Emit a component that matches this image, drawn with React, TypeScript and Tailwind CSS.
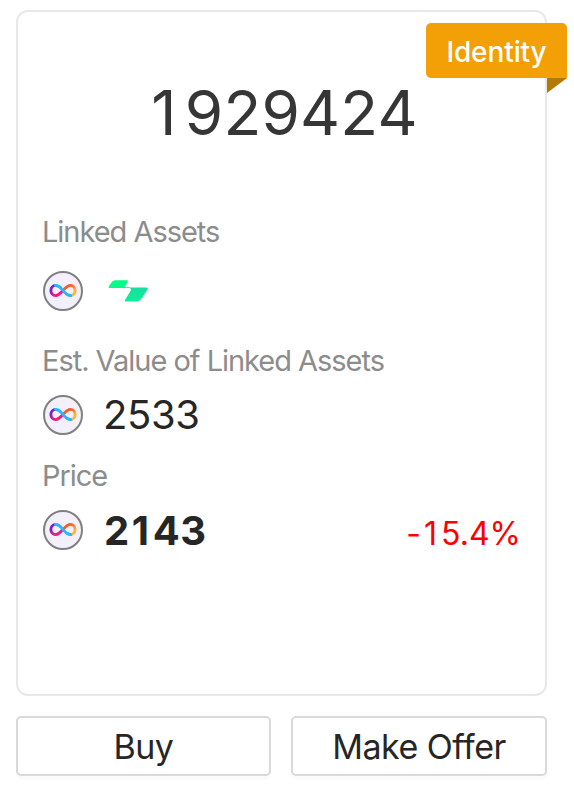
import React from "react";

const InfinityCoin = ({ id }: { id: string }) => (
  <svg viewBox="0 0 40 40" className="size-10 shrink-0" fill="none">
    <defs>
      <linearGradient id={`${id}-left`} x1="7" y1="16" x2="17" y2="25" gradientUnits="userSpaceOnUse">
        <stop offset="0.2" stopColor="#7a1fd0" />
        <stop offset="0.65" stopColor="#f5157e" />
      </linearGradient>
      <linearGradient id={`${id}-right`} x1="22" y1="14" x2="33" y2="24" gradientUnits="userSpaceOnUse">
        <stop offset="0.35" stopColor="#ff5a1f" />
        <stop offset="0.75" stopColor="#ffb43b" />
      </linearGradient>
    </defs>
    <circle cx="20" cy="20" r="19" fill="#f3f0fb" stroke="#808080" strokeWidth="2" />
    <g strokeWidth="2.9">
      <path
        d="M20 19.5C17.5 22.2 15.5 24.6 12.7 24.6C9.9 24.6 7.9 22.3 7.9 19.5C7.9 16.7 9.9 14.4 12.7 14.4"
        stroke={`url(#${id}-left)`}
      />
      <path
        d="M20 19.5C22.5 16.8 24.5 14.4 27.3 14.4C30.1 14.4 32.1 16.7 32.1 19.5C32.1 22.3 30.1 24.6 27.3 24.6"
        stroke={`url(#${id}-right)`}
      />
      <path d="M11.2 14.7C15.6 13.2 17.5 16.8 20 19.5C22.5 22.2 24.4 25.8 28.8 24.3" stroke="#2bb5fb" />
    </g>
  </svg>
);

const SlantedBlocks = () => (
  <svg viewBox="0 0 42 24" className="h-6 w-[42px] shrink-0">
    <defs>
      <linearGradient id="blocks-bottom" x1="0" y1="0" x2="0" y2="1">
        <stop offset="0" stopColor="#17dd9e" />
        <stop offset="1" stopColor="#0cf19b" />
      </linearGradient>
    </defs>
    <path
      d="M8.1 1.2H19.7Q21.8 1.2 20.7 2.8L18.2 7Q17.6 8.2 19.5 8.3H22.5L22.1 8.9H2.7Q.8 8.9 1.9 7.2L4.9 3Q6.1 1.2 8.1 1.2Z"
      fill="#04fb87"
    />
    <path
      d="M20.5 8.4H39.2Q41.9 8.4 40.3 10.9L34.5 19.8Q32.6 22.6 29.3 22.6H19.5Q16.8 22.6 18.5 20L22.9 13.1Q24.8 10 23.1 9.2Q22.4 8.7 20.5 8.7Z"
      fill="url(#blocks-bottom)"
    />
  </svg>
);

const Label = ({ children }: { children: React.ReactNode }) => (
  <p className="-ml-px h-9 whitespace-nowrap text-[29px] leading-9 tracking-[-1.03px] text-[#8c8c8c]">{children}</p>
);

// The narrow "1" gets side padding so that numbers stay evenly spaced
const Digits = ({ value, onePadding }: { value: string; onePadding: string }) => (
  <>
    {value.split("").map((char, i) => (
      <span key={i} className={char === "1" ? onePadding : undefined}>
        {char}
      </span>
    ))}
  </>
);

const actions = [
  { name: "Buy", width: "w-[255px]" },
  { name: "Make Offer", width: "w-[256px]" },
];

export default function App() {
  return (
    <main className="h-[805px] w-[574px] bg-white pt-[10px] pl-4 font-['Inter',sans-serif] text-[#262626]">
      <section className="relative h-[686px] w-[531px] rounded-xl border-2 border-[#e8e8e8] px-[25px]">
        {/* Corner ribbon */}
        <div className="absolute top-[11px] right-[-22px] flex h-[55px] w-[141px] items-center justify-center rounded-[5px] rounded-br-none bg-[#f3a006] pt-[2px] text-[28px] font-medium text-white">
          <span className="tracking-[-0.1px]">Identity</span>
          <svg viewBox="0 0 20 15" className="absolute top-full right-0 h-[15px] w-5">
            <path d="M0 0H20L0 15Z" fill="#b67804" />
          </svg>
        </div>

        <h1 className="mt-[66px] h-[70px] pl-px text-center text-[62px] leading-[70px] tracking-[0.2px] text-[#363636]">
          <Digits value="1929424" onePadding="pl-[5px] pr-[8px]" />
        </h1>

        <div className="mt-[66px]">
          <Label>Linked Assets</Label>
          <div className="mt-[21px] flex items-center gap-6">
            <InfinityCoin id="linked" />
            <SlantedBlocks />
          </div>
        </div>

        <div className="mt-8">
          <Label>Est. Value of Linked Assets</Label>
          <div className="mt-4 flex h-10 items-center gap-[20px]">
            <InfinityCoin id="value" />
            <span className="text-[40px] leading-10 tracking-[-0.4px]">2533</span>
          </div>
        </div>

        <div className="mt-[23px]">
          <Label>Price</Label>
          <div className="mt-4 flex h-10 items-center gap-[21px]">
            <InfinityCoin id="price" />
            <span className="mt-[2px] text-[40px] leading-10 font-bold tracking-[0.6px]">
              <Digits value="2143" onePadding="pl-[2px] pr-[3px]" />
            </span>
            <span className="mt-2 mr-[-1px] ml-auto text-[32px] leading-10 text-[#ff0000]">
              <Digits value="-15.4%" onePadding="pl-[3px] pr-[4px]" />
            </span>
          </div>
        </div>
      </section>

      <div className="mt-5 flex w-[531px] gap-5">
        {actions.map(({ name, width }) => (
          <button
            key={name}
            className={`${width} h-[60px] shrink-0 rounded-[5px] border-2 border-[#d9d9d9] bg-white pt-[2px] text-[34px] leading-none tracking-[-0.5px] whitespace-nowrap shadow-[0_4px_0_rgba(0,0,0,0.016)]`}
          >
            {name}
          </button>
        ))}
      </div>
    </main>
  );
}
